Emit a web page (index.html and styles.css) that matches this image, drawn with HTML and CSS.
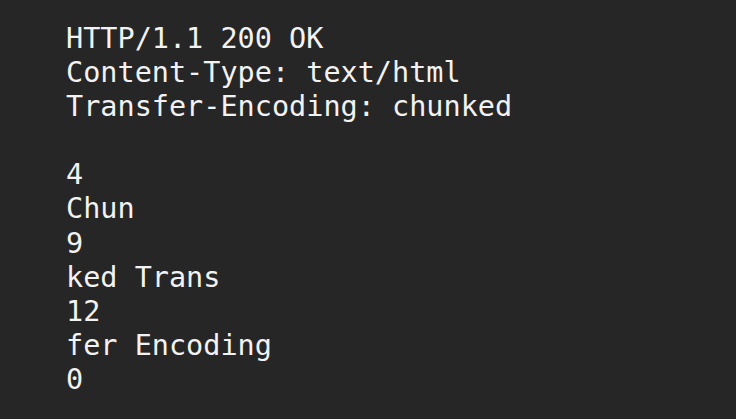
FILE: index.html
```html
<!DOCTYPE html>
<html>
<head>
<meta charset="utf-8">
<link rel="stylesheet" href="styles.css">
</head>
<body>
<pre class="response">HTTP/1.1 200 OK
Content-Type: text/html
Transfer-Encoding: chunked

4
Chun
9
ked Trans
12
fer Encoding
0</pre>
</body>
</html>
```
FILE: styles.css
```css
html, body {
  margin: 0;
  padding: 0;
  background: #262626;
  height: 100%;
  overflow: hidden;
}
.response {
  margin: 0;
  padding: 22px 0 0 66px;
  font-family: "DejaVu Sans Mono", monospace;
  font-size: 28.5px;
  line-height: 34.1px;
  color: #f2f2f2;
}
```
